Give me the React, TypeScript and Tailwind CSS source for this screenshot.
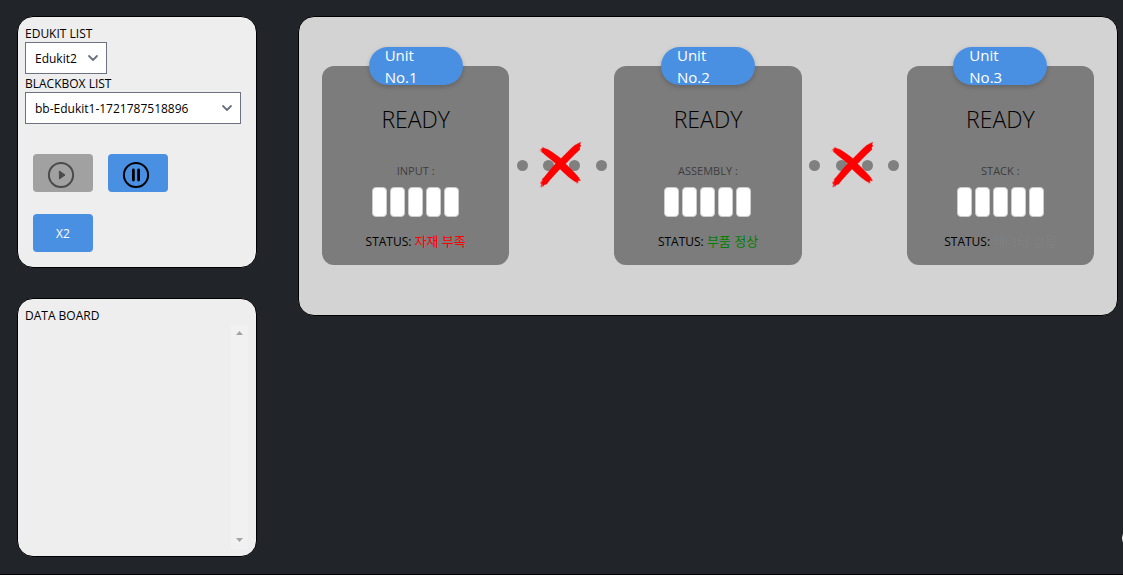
import React from "react";

type Unit = {
  name: string;
  label: string;
  status: string;
  tone: string;
};

const UNITS: Unit[] = [
  { name: "No.1", label: "INPUT :", status: "자재 부족", tone: "text-[#ff0000]" },
  { name: "No.2", label: "ASSEMBLY :", status: "부품 정상", tone: "text-[#008000]" },
  { name: "No.3", label: "STACK :", status: "데이터 없음", tone: "text-[#808080]" },
];

const SLOTS = [0, 1, 2, 3, 4];
const DOTS = [0, 1, 2, 3];

function Picker({ id, label, value, width }: { id: string; label: string; value: string; width: string }) {
  return (
    <div className="flex flex-col items-start">
      <label htmlFor={id} className="block h-[18px] leading-5">
        {label}
      </label>
      <div className={`grid items-center ${width}`}>
        <select
          id={id}
          defaultValue={value}
          className="col-start-1 row-start-1 h-8 w-full appearance-none border border-[#6b7280] bg-white pt-0.5 pr-6 pl-[9px] text-xs text-black"
        >
          <option>{value}</option>
        </select>
        <svg
          className="pointer-events-none col-start-1 row-start-1 mr-2 h-3 w-3 justify-self-end"
          viewBox="0 0 12 12"
          fill="none"
          stroke="#6b7280"
          strokeWidth="1.8"
          strokeLinecap="round"
          strokeLinejoin="round"
          aria-hidden="true"
        >
          <path d="M2 4 L6 8 L10 4" />
        </svg>
      </div>
    </div>
  );
}

function PlayIcon() {
  return (
    <svg className="h-7 w-7" viewBox="0 0 28 28" fill="none" aria-hidden="true">
      <circle cx="14" cy="14" r="12.1" stroke="#4b4b4b" strokeWidth="2" />
      <path d="M12.4 10 L18 14 L12.4 18 Z" fill="#4b4b4b" stroke="#4b4b4b" strokeWidth="1" strokeLinejoin="round" />
    </svg>
  );
}

function PauseIcon() {
  return (
    <svg className="h-7 w-7" viewBox="0 0 28 28" fill="none" stroke="#000" aria-hidden="true">
      <circle cx="14" cy="14" r="12.1" strokeWidth="2" />
      <path d="M11.4 9 V19 M16.6 9 V19" strokeWidth="2.8" strokeLinecap="round" />
    </svg>
  );
}

function BrushCross() {
  return (
    <svg className="h-[47px] w-[43px]" viewBox="0 0 43 47" aria-hidden="true">
      <path
        fill="#ff0000"
        stroke="#ff0000"
        strokeWidth="0.3"
        d="M1.5 7 L4 6.6 L3.4 5.2 L6 6.4 L9 7.4 L13 10 L18 13.6 L22 16.6 L27 11.6 L32 6.4 L36 3 L39 1.8 L41.5 0.4 L41 2.4 L42 3.4 L40.6 5.8 L41 7.4 L35.4 12.8 L30.4 17.8 L26.6 21.8 L31.4 26.6 L36 31.2 L39.6 35.2 L41.2 38.8 L39 38.6 L38.4 40.8 L35 39 L29.6 35 L24.6 30.4 L21 27 L16.4 32 L11.4 37.4 L7.6 42.2 L5.4 42.8 L4 44.6 L3.6 42.4 L1.8 45 L2.8 41.8 L1.4 41.4 L3.8 38.6 L3 37.4 L5.8 34.4 L9.8 29.4 L16.6 21.6 L11.6 17.2 L6.2 13 L3.8 10.8 L2.4 10 L3 8.6 Z"
      />
      <path
        stroke="#ff0000"
        strokeOpacity="0.55"
        strokeWidth="0.8"
        fill="none"
        d="M0.5 9 L4 8.4 M1 40.4 L5 37.4 M1.5 44 L5 41.4 M2.5 45.6 L4 43.4 M38 2 L42 0.4 M39.6 38 L42 38.2 M37.6 41.4 L40 40"
      />
    </svg>
  );
}

function Connector() {
  return (
    <div className="grid w-[105px] shrink-0 items-center pt-[94px]">
      <div className="col-start-1 row-start-1 flex justify-around">
        {DOTS.map((dot) => (
          <span key={dot} className="h-[11px] w-[11px] rounded-full bg-[#808080]" />
        ))}
      </div>
      <div className="col-start-1 row-start-1 -my-5 flex justify-center pr-[3px]">
        <BrushCross />
      </div>
    </div>
  );
}

function UnitCard({ unit }: { unit: Unit }) {
  return (
    <section className="flex min-w-0 flex-1 flex-col items-center rounded-xl bg-[#7c7c7c] pb-[14px]">
      <h2 className="-mt-[19px] flex h-[38px] w-[94px] flex-col justify-center rounded-[19px] bg-[#4a90e2] px-4 text-[15px] leading-[22px] text-white shadow-[0_2px_5px_rgba(0,0,0,0.2)]">
        <span>Unit</span>
        <span>{unit.name}</span>
      </h2>
      <p className="mt-[18px] text-[23px] leading-8 font-light">READY</p>
      <p className="mt-7 text-[11px] leading-4 text-[#3c3c3c]">{unit.label}</p>
      <div className="mt-2 flex gap-[3px]">
        {SLOTS.map((slot) => (
          <span key={slot} className="h-[30px] w-[15px] rounded-[4px] border border-[#cccccc] bg-white" />
        ))}
      </div>
      <p className="mt-[15px] leading-[18px] whitespace-nowrap">
        STATUS: <span className={`text-[13px] ${unit.tone}`}>{unit.status}</span>
      </p>
    </section>
  );
}

export default function App() {
  return (
    <div className="flex min-h-screen items-start gap-[41px] border-b border-black bg-[#212529] pt-4 pr-[5px] pl-[17px] font-['Open_Sans','Noto_Sans_CJK_KR',sans-serif] text-xs text-black">
      <aside className="flex w-60 shrink-0 flex-col gap-[30px]">
        <section className="rounded-2xl border border-black bg-[#eeeeee] px-[7px] pt-[7px] pb-[15px]">
          <Picker id="edukit" label="EDUKIT LIST" value="Edukit2" width="w-[82px]" />
          <Picker id="blackbox" label="BLACKBOX LIST" value="bb-Edukit1-1721787518896" width="w-[216px]" />
          <div className="mt-[30px] ml-2 grid grid-cols-[60px_60px] gap-x-[15px] gap-y-[22px]">
            <button
              type="button"
              disabled
              aria-label="Play"
              className="flex h-[38px] items-center justify-center rounded-[4px] bg-[#a1a1a1] pt-1 pr-1"
            >
              <PlayIcon />
            </button>
            <button
              type="button"
              aria-label="Pause"
              className="flex h-[38px] items-center justify-center rounded-[4px] bg-[#4a90e2] pt-1 pr-1"
            >
              <PauseIcon />
            </button>
            <button type="button" className="h-[38px] rounded-[4px] bg-[#4a90e2] pt-0.5 text-white">
              X2
            </button>
          </div>
        </section>

        <section className="rounded-2xl border border-black bg-[#eeeeee] px-[7px] pt-2 pb-[7px]">
          <h2 className="leading-[18px]">DATA BOARD</h2>
          <div className="flex h-[224px] justify-end pr-px">
            <div className="flex w-[17px] flex-col items-center justify-between bg-[#f1f1f1] pt-[6px] pb-[7px]" aria-hidden="true">
              <svg className="h-1 w-[7px]" viewBox="0 0 7 4">
                <path d="M0 4 L3.5 0 L7 4 Z" fill="#a3a3a3" />
              </svg>
              <svg className="h-1 w-[7px]" viewBox="0 0 7 4">
                <path d="M0 0 L3.5 4 L7 0 Z" fill="#a3a3a3" />
              </svg>
            </div>
          </div>
        </section>
      </aside>

      <main className="flex min-w-0 flex-1 items-start rounded-2xl border border-black bg-[#d3d3d3] px-[23px] pt-[49px] pb-[50px]">
        {UNITS.map((unit, index) => (
          <React.Fragment key={unit.name}>
            {index > 0 && <Connector />}
            <UnitCard unit={unit} />
          </React.Fragment>
        ))}
      </main>

      <span className="fixed -right-[19px] bottom-[27px] h-5 w-5 rounded-full bg-white" aria-hidden="true" />
    </div>
  );
}
